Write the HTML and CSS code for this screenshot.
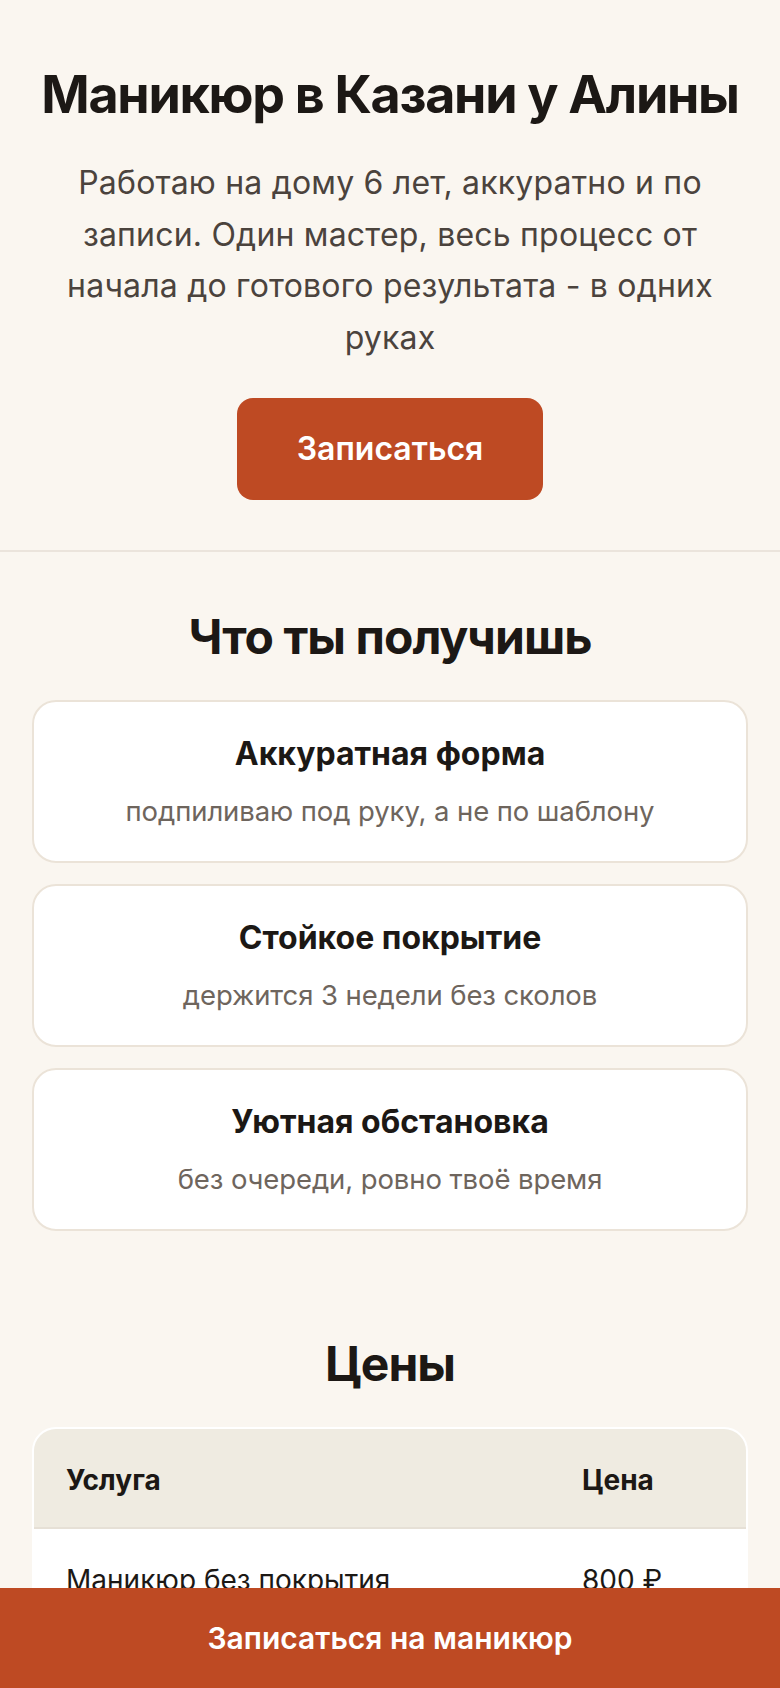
FILE: index.html
```html
<!DOCTYPE html>
<html lang="ru">
<head>
<meta charset="utf-8">
<title>Маникюр в Казани у Алины</title>
<link rel="stylesheet" href="styles.css">
</head>
<body>
<header class="hero">
  <h1 class="hero-title">Маникюр в Казани у Алины</h1>
  <p class="hero-text">Работаю на дому 6 лет, аккуратно и по записи. Один мастер, весь процесс от начала до готового результата - в одних руках</p>
  <a class="btn" href="#">Записаться</a>
</header>
<section class="section">
  <h2 class="section-title">Что ты получишь</h2>
  <div class="cards">
    <div class="card">
      <h3 class="card-title">Аккуратная форма</h3>
      <p class="card-text">подпиливаю под руку, а не по шаблону</p>
    </div>
    <div class="card">
      <h3 class="card-title">Стойкое покрытие</h3>
      <p class="card-text">держится 3 недели без сколов</p>
    </div>
    <div class="card">
      <h3 class="card-title">Уютная обстановка</h3>
      <p class="card-text">без очереди, ровно твоё время</p>
    </div>
  </div>
</section>
<section class="section">
  <h2 class="section-title">Цены</h2>
  <div class="table-wrap">
    <table class="prices">
      <thead>
        <tr><th>Услуга</th><th class="col-price">Цена</th></tr>
      </thead>
      <tbody>
        <tr><td>Маникюр без покрытия</td><td class="col-price">800 ₽</td></tr>
      </tbody>
    </table>
  </div>
</section>
<a class="sticky-cta" href="#">Записаться на маникюр</a>
</body>
</html>
```

FILE: styles.css
```css
* { box-sizing: border-box; }
html, body { margin: 0; padding: 0; }
body {
  background: #faf6f0;
  font-family: Inter, "Noto Sans", sans-serif;
  color: #1c1815;
}
.hero {
  padding: 64px 32px 50px;
  text-align: center;
  border-bottom: 2px solid #ebe4dc;
  display: flex;
  flex-direction: column;
  align-items: center;
}
.hero-title {
  margin: 0;
  font-size: 52px;
  line-height: 62px;
  font-weight: 700;
  letter-spacing: -0.025em;
}
.hero-text {
  margin: 31px 0 0;
  max-width: 690px;
  font-size: 32px;
  line-height: 51.5px;
  letter-spacing: 0.2px;
  color: #4b433d;
}
.btn {
  margin-top: 35px;
  display: inline-block;
  padding: 32px 60px;
  background: #be4a23;
  color: #fff;
  border-radius: 16px;
  font-size: 32px;
  line-height: 38px;
  font-weight: 600;
  text-decoration: none;
}
.section {
  padding: 56px 32px 48px;
}
.section-title {
  margin: 0 0 34px;
  text-align: center;
  font-size: 48px;
  line-height: 58px;
  font-weight: 700;
  letter-spacing: -0.02em;
}
.cards {
  display: flex;
  flex-direction: column;
  gap: 21px;
}
.card {
  background: #fff;
  border: 2px solid #ebe3d8;
  border-radius: 24px;
  padding: 32px 32px 29px;
  text-align: center;
}
.card-title {
  margin: 0;
  font-size: 32px;
  line-height: 40px;
  font-weight: 700;
}
.card-text {
  margin: 16px 0 0;
  font-size: 27.5px;
  line-height: 42px;
  letter-spacing: -0.1px;
  color: #6e655d;
}
.table-wrap {
  background: #fff;
  border: 2px solid #fff;
  border-radius: 24px;
  overflow: hidden;
}
.prices {
  width: 100%;
  border-collapse: collapse;
  font-size: 28px;
  line-height: 42px;
}
.prices th {
  background: #efebe1;
  text-align: left;
  font-weight: 700;
  padding: 30px 32px 26px;
  border-bottom: 2px solid #e6e0d6;
}
.prices td {
  padding: 30px 32px;
  color: #1c1815;
}
.col-price { width: 196px; }
.sticky-cta {
  position: fixed;
  left: 0;
  right: 0;
  bottom: 0;
  display: block;
  padding: 30px 16px;
  background: #be4a23;
  color: #fff;
  text-align: center;
  font-size: 30px;
  line-height: 40px;
  font-weight: 600;
  text-decoration: none;
}
```
